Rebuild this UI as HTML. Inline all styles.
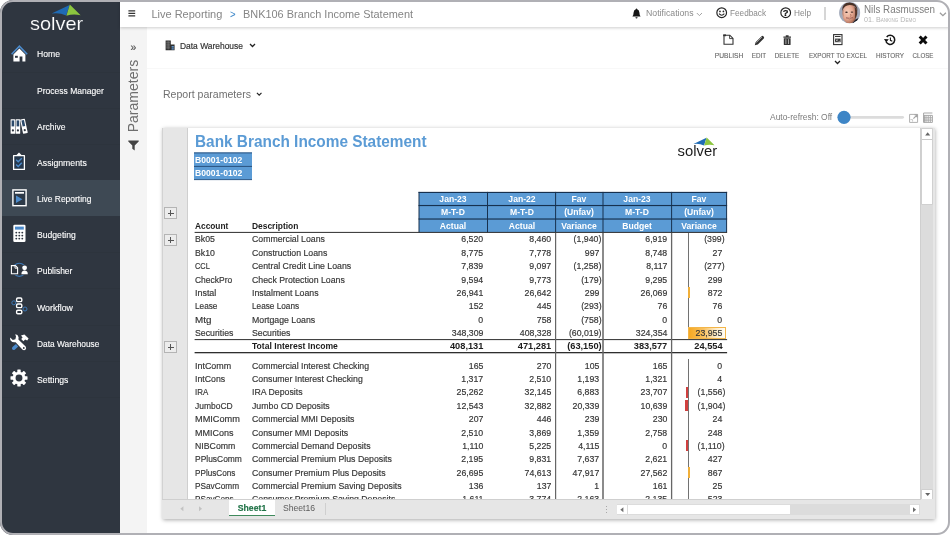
<!DOCTYPE html>
<html lang="en">
<head>
<meta charset="utf-8">
<title>Solver - Live Reporting - BNK106 Branch Income Statement</title>
<style>
html,body{margin:0;padding:0;width:950px;height:535px;overflow:hidden;background:#fff}
body{font-family:"Liberation Sans",sans-serif;position:relative}
#app{position:absolute;left:0;top:0;width:950px;height:535px;border-radius:13px;overflow:hidden;background:#fff;will-change:transform}
#frame{position:absolute;left:0;top:0;width:950px;height:535px;box-sizing:border-box;border:2px solid #b0b0b5;border-radius:13px;pointer-events:none}
.t{position:absolute;white-space:nowrap;display:block}
.a{position:absolute;display:block}
svg.a{overflow:visible}
#side{left:0;top:0;width:120px;height:535px;background:#2f3640}
#side .sep{position:absolute;left:0;width:120px;height:1px;background:#2d343d}
#side .act{position:absolute;left:0;top:180px;width:120px;height:36px;background:#3e4954}
#top{left:120px;top:0;width:830px;height:27px;background:#fff;box-shadow:0 1px 3px rgba(0,0,0,.2)}
#pstrip{left:120px;top:27px;width:27px;height:508px;background:#f4f4f4}
#sheet{left:162.5px;top:128px;width:772.2px;height:391px;background:#e6e6e6;box-shadow:0 1px 4px rgba(0,0,0,.35)}
#grid{left:188px;top:128px;width:732px;height:371px;background:#fff;overflow:hidden}
.plus{position:absolute;left:164px;width:11px;height:10px;border:1px solid #b4b4b4;background:#ececec;box-sizing:content-box}
.plus:before{content:"";position:absolute;left:2.5px;top:4.5px;width:6px;height:1px;background:#555}
.plus:after{content:"";position:absolute;left:5px;top:2px;width:1px;height:6px;background:#555}
.hc{position:absolute;background:#5b9bd5;box-sizing:border-box;border:1px solid #1f3f63}
.vl{position:absolute;background:#6b6b6b}
.hl{position:absolute;background:#3a3a3a}
</style>
</head>
<body>
<div id="app">
<div class="a" id="side">
<div class="sep" style="top:72px"></div>
<div class="sep" style="top:108px"></div>
<div class="sep" style="top:144px"></div>
<div class="sep" style="top:252px"></div>
<div class="sep" style="top:288px"></div>
<div class="sep" style="top:325px"></div>
<div class="sep" style="top:361px"></div>
<div class="sep" style="top:397px"></div>
<div class="act"></div>
</div>
<svg class="a" style="left:51px;top:4px" width="30" height="13" viewBox="0 0 30 13" ><path d="M0.6 9.6 L18.6 1 L15.2 11.6 Q8 8.2 0.6 9.6Z" fill="#1f6bb5"/><path d="M18.8 0.6 L29.6 11.2 Q22 9.6 15.4 11.8Z" fill="#8cc63f"/></svg>
<span class="t" style="top:12.53px;font-size:17.8px;line-height:23.14px;color:#fff;left:29.8px;transform-origin:0 50%;transform:scaleX(1.121);-webkit-text-stroke:0.15px #2f3640;">solver</span>
<svg class="a" style="left:11px;top:45px" width="17" height="17" viewBox="0 0 17 17" ><path d="M0.6 9.2 L8.4 1.2 L16.2 9.2" fill="none" stroke="#4c8bcc" stroke-width="1.6"/><path d="M2.4 9.6 L8.4 3.6 L14.4 9.6 V16.6 H11.4 V11.6 H8.6 V16.6 H2.4Z" fill="#fff"/><rect x="4" y="10.8" width="2.8" height="2" fill="#2f3640"/></svg>
<svg class="a" style="left:10px;top:118px" width="19" height="17" viewBox="0 0 19 17" ><rect x="0.6" y="1.2" width="4.6" height="14.6" rx="0.6" fill="#fff"/><rect x="5.6" y="1.2" width="4.6" height="14.6" rx="0.6" fill="#fff"/><rect x="1.6" y="2.4" width="2.6" height="6" fill="#2c4a6b"/><rect x="6.6" y="2.4" width="2.6" height="6" fill="#2c4a6b"/><circle cx="2.9" cy="12.4" r="1.1" fill="#2f3640"/><circle cx="7.9" cy="12.4" r="1.1" fill="#2f3640"/><g transform="rotate(-12 14 8.5)"><rect x="11.6" y="1" width="4.8" height="14.6" rx="0.6" fill="#fff"/><rect x="12.7" y="2.2" width="2.6" height="6" fill="#2c4a6b"/><circle cx="14" cy="12.2" r="1.1" fill="#2f3640"/></g></svg>
<svg class="a" style="left:12px;top:151px" width="14" height="20" viewBox="0 0 14 20" ><path d="M1.6 4.6 H12.4 V18.4 H1.6Z" fill="#26384d" stroke="#fff" stroke-width="1.3" stroke-linejoin="round"/><path d="M4 4.6 L7 1.4 L10 4.6Z" fill="#fff"/><path d="M4.2 8.8 L6.2 10.8 L9.8 7.2 M4.2 13.4 L6.2 15.4 L9.8 11.8" fill="none" stroke="#4c8bcc" stroke-width="1.4"/></svg>
<svg class="a" style="left:12px;top:189px" width="15" height="18" viewBox="0 0 15 18" ><rect x="0.9" y="0.9" width="13.2" height="15.8" fill="#2d3a48" stroke="#fff" stroke-width="1.4"/><rect x="3" y="3" width="9" height="1.7" fill="#fff"/><path d="M4 6.6 L10.4 10.3 L4 14Z" fill="#4c8bcc"/></svg>
<svg class="a" style="left:13px;top:224px" width="13" height="19" viewBox="0 0 13 19" ><rect x="0.3" y="0.8" width="12.2" height="17.2" rx="1.3" fill="#fff"/><rect x="2" y="2.6" width="8.8" height="3" fill="#4c8bcc"/><circle cx="3.3" cy="8.6" r="0.95" fill="#2f3640"/><circle cx="3.3" cy="11.6" r="0.95" fill="#2f3640"/><circle cx="3.3" cy="14.6" r="0.95" fill="#2f3640"/><circle cx="6.3" cy="8.6" r="0.95" fill="#2f3640"/><circle cx="6.3" cy="11.6" r="0.95" fill="#2f3640"/><circle cx="6.3" cy="14.6" r="0.95" fill="#2f3640"/><circle cx="9.3" cy="8.6" r="0.95" fill="#2f3640"/><circle cx="9.3" cy="11.6" r="0.95" fill="#2f3640"/><circle cx="9.3" cy="14.6" r="0.95" fill="#2f3640"/></svg>
<svg class="a" style="left:10px;top:260px" width="19" height="19" viewBox="0 0 19 19" ><circle cx="9.3" cy="9.8" r="6.6" fill="none" stroke="#3d78b5" stroke-width="1.1"/><rect x="0.2" y="5" width="8.4" height="9.8" fill="#2f3640"/><rect x="10.6" y="5" width="8" height="9.8" fill="#2f3640"/><path d="M1.4 5.6 H5.4 L7.6 7.8 V13.8 H1.4Z" fill="none" stroke="#fff" stroke-width="1.1"/><path d="M5 5.6 V8.2 H7.6" fill="none" stroke="#fff" stroke-width="0.9"/><circle cx="14.6" cy="7.8" r="2.4" fill="#fff"/><path d="M11.4 14.2 Q11.4 10.6 14.6 10.6 Q17.8 10.6 17.8 14.2Z" fill="#fff"/></svg>
<svg class="a" style="left:11px;top:296px" width="17" height="20" viewBox="0 0 17 20" ><circle cx="2.8" cy="6.8" r="2" fill="none" stroke="#3d78b5" stroke-width="1"/><circle cx="14" cy="13" r="2" fill="none" stroke="#3d78b5" stroke-width="1"/><rect x="5.6" y="2" width="5.2" height="3.6" rx="1.2" fill="#2f3640" stroke="#fff" stroke-width="1.4"/><rect x="5.6" y="8" width="5.2" height="3.6" rx="1.2" fill="#2f3640" stroke="#fff" stroke-width="1.4"/><rect x="5.6" y="14.2" width="5.2" height="3.6" rx="1.2" fill="#2f3640" stroke="#fff" stroke-width="1.4"/></svg>
<svg class="a" style="left:9px;top:333px" width="21" height="19" viewBox="0 0 21 19" ><path d="M4 13.4 L7 11 L9.2 13.6 L6 16.4 Q4.4 17.6 3.2 16.2 Q2.2 14.8 4 13.4Z" fill="#4c8bcc"/><path d="M12 2.4 L15.4 1.6 L19.6 5.6 L18.2 7.6 L16.2 6.4 L14.4 8.2 L12.2 6 L13.6 4.4Z" fill="#fff"/><path d="M6.2 1.2 Q9 1.4 9.6 4.2 L9.4 6.4 L16.6 13.6 Q17.8 15.4 16.4 16.8 Q14.8 17.8 13.4 16.4 L6.6 9.2 Q3.4 9.8 1.6 7.4 Q0.8 6 1.2 4.6 L3.8 7 L6.4 6.2 L7 3.6Z" fill="#fff"/><circle cx="14.8" cy="15" r="0.9" fill="#2f3640"/></svg>
<svg class="a" style="left:10.4px;top:369.4px" width="18" height="18" viewBox="-9 -9 18 18" ><rect x="-1.7" y="-8.5" width="3.4" height="4" rx="0.4" transform="rotate(0)" fill="#fff"/><rect x="-1.7" y="-8.5" width="3.4" height="4" rx="0.4" transform="rotate(45)" fill="#fff"/><rect x="-1.7" y="-8.5" width="3.4" height="4" rx="0.4" transform="rotate(90)" fill="#fff"/><rect x="-1.7" y="-8.5" width="3.4" height="4" rx="0.4" transform="rotate(135)" fill="#fff"/><rect x="-1.7" y="-8.5" width="3.4" height="4" rx="0.4" transform="rotate(180)" fill="#fff"/><rect x="-1.7" y="-8.5" width="3.4" height="4" rx="0.4" transform="rotate(225)" fill="#fff"/><rect x="-1.7" y="-8.5" width="3.4" height="4" rx="0.4" transform="rotate(270)" fill="#fff"/><rect x="-1.7" y="-8.5" width="3.4" height="4" rx="0.4" transform="rotate(315)" fill="#fff"/><circle r="4.9" fill="none" stroke="#fff" stroke-width="2.9"/></svg>
<span class="t" style="top:47.63px;font-size:9.8px;line-height:12.74px;color:#fff;left:36.7px;transform-origin:0 50%;transform:scaleX(0.880);-webkit-text-stroke:0.12px #fff;">Home</span>
<span class="t" style="top:84.93px;font-size:9.8px;line-height:12.74px;color:#fff;left:36.7px;transform-origin:0 50%;transform:scaleX(0.870);-webkit-text-stroke:0.12px #fff;">Process Manager</span>
<span class="t" style="top:121.23px;font-size:9.8px;line-height:12.74px;color:#fff;left:36.7px;transform-origin:0 50%;transform:scaleX(0.869);-webkit-text-stroke:0.12px #fff;">Archive</span>
<span class="t" style="top:157.23px;font-size:9.8px;line-height:12.74px;color:#fff;left:36.7px;transform-origin:0 50%;transform:scaleX(0.888);-webkit-text-stroke:0.12px #fff;">Assignments</span>
<span class="t" style="top:193.23px;font-size:9.8px;line-height:12.74px;color:#fff;left:36.7px;transform-origin:0 50%;transform:scaleX(0.861);-webkit-text-stroke:0.12px #fff;">Live Reporting</span>
<span class="t" style="top:228.93px;font-size:9.8px;line-height:12.74px;color:#fff;left:36.7px;transform-origin:0 50%;transform:scaleX(0.879);-webkit-text-stroke:0.12px #fff;">Budgeting</span>
<span class="t" style="top:264.93px;font-size:9.8px;line-height:12.74px;color:#fff;left:36.7px;transform-origin:0 50%;transform:scaleX(0.867);-webkit-text-stroke:0.12px #fff;">Publisher</span>
<span class="t" style="top:301.73px;font-size:9.8px;line-height:12.74px;color:#fff;left:36.7px;transform-origin:0 50%;transform:scaleX(0.893);-webkit-text-stroke:0.12px #fff;">Workflow</span>
<span class="t" style="top:337.63px;font-size:9.8px;line-height:12.74px;color:#fff;left:36.7px;transform-origin:0 50%;transform:scaleX(0.853);-webkit-text-stroke:0.12px #fff;">Data Warehouse</span>
<span class="t" style="top:374.23px;font-size:9.8px;line-height:12.74px;color:#fff;left:36.7px;transform-origin:0 50%;transform:scaleX(0.887);-webkit-text-stroke:0.12px #fff;">Settings</span>
<div class="a" id="pstrip"></div>
<span class="t" style="top:41.17px;font-size:10.5px;line-height:13.65px;color:#555;left:133.4px;transform-origin:0 50%;transform-origin:50% 50%;transform:translateX(-50%);-webkit-text-stroke:0.2px #555;">»</span>
<span class="t" style="top:85.92px;font-size:15.5px;line-height:20.15px;color:#6e6e6e;left:133.2px;transform-origin:0 50%;transform-origin:50% 50%;transform:translateX(-50%) rotate(-90deg) scaleX(0.905);">Parameters</span>
<svg class="a" style="left:127.6px;top:139.6px" width="11" height="11" viewBox="0 0 11 11" ><path d="M0.3 0.4 H10.7 V1.4 L6.7 5.6 V10.6 L4.3 8.8 V5.6 L0.3 1.4Z" fill="#444"/></svg>
<div class="a" style="left:147px;top:68px;width:803px;height:1px;background:#f8f8f8"></div>
<div class="a" id="top"></div>
<svg class="a" style="left:128px;top:10px" width="8" height="7" viewBox="0 0 8 7" ><path d="M0.4 0.9 H7.2 M0.4 3.4 H7.2 M0.4 5.9 H7.2" stroke="#333" stroke-width="1.1" fill="none"/></svg>
<span class="t" style="top:6.85px;font-size:11px;line-height:14.3px;color:#858585;left:151.4px;transform-origin:0 50%;">Live Reporting</span>
<span class="t" style="top:7.25px;font-size:11px;line-height:14.3px;color:#3b86c8;left:229.8px;transform-origin:0 50%;transform:scaleX(0.870);">&gt;</span>
<span class="t" style="top:6.85px;font-size:11px;line-height:14.3px;color:#858585;left:243.4px;transform-origin:0 50%;transform:scaleX(0.993);">BNK106 Branch Income Statement</span>
<svg class="a" style="left:631.8px;top:7.6px" width="9" height="11" viewBox="0 0 9 11" ><path d="M4.5 0.4 Q5.2 0.4 5.2 1.2 Q7.4 1.9 7.4 4.6 Q7.4 7.2 8.6 8.4 H0.4 Q1.6 7.2 1.6 4.6 Q1.6 1.9 3.8 1.2 Q3.8 0.4 4.5 0.4Z M3.4 9.2 H5.6 Q5.4 10.4 4.5 10.4 Q3.6 10.4 3.4 9.2Z" fill="#151515"/></svg>
<span class="t" style="top:7.85px;font-size:9px;line-height:11.7px;color:#8a8a8a;left:645.6px;transform-origin:0 50%;transform:scaleX(0.971);">Notifications</span>
<svg class="a" style="left:696px;top:12px" width="7" height="5" viewBox="0 0 7 5" ><path d="M0.8 1 L3.4 3.6 L6 1" fill="none" stroke="#9a9a9a" stroke-width="0.9"/></svg>
<svg class="a" style="left:716px;top:7.4px" width="11.4" height="11.4" viewBox="0 0 12 12" ><circle cx="6" cy="6" r="5.1" fill="none" stroke="#222" stroke-width="1.25"/><circle cx="4.2" cy="4.7" r="0.9" fill="#222"/><circle cx="7.8" cy="4.7" r="0.9" fill="#222"/><path d="M3.2 7 Q6 10.2 8.8 7" fill="none" stroke="#222" stroke-width="1.1"/></svg>
<span class="t" style="top:7.85px;font-size:9px;line-height:11.7px;color:#8a8a8a;left:730.4px;transform-origin:0 50%;transform:scaleX(0.911);">Feedback</span>
<svg class="a" style="left:780px;top:7.4px" width="11.4" height="11.4" viewBox="0 0 12 12" ><circle cx="6" cy="6" r="5.1" fill="none" stroke="#222" stroke-width="1.25"/></svg>
<span class="t" style="top:7.29px;font-size:9.4px;line-height:12.22px;color:#111;font-weight:700;left:785.7px;transform-origin:0 50%;transform-origin:50% 50%;transform:translateX(-50%);-webkit-text-stroke:0.2px #111;">?</span>
<span class="t" style="top:7.85px;font-size:9px;line-height:11.7px;color:#8a8a8a;left:794.4px;transform-origin:0 50%;transform:scaleX(0.918);">Help</span>
<div class="a" style="left:824.2px;top:7px;width:1.4px;height:13px;background:#d6d6d6"></div>
<svg class="a" style="left:838.9px;top:2.2px" width="21.4" height="21.4" viewBox="0 0 21.4 21.4" ><defs><clipPath id="av"><circle cx="10.7" cy="10.7" r="10.6"/></clipPath><filter id="avb" x="-20%" y="-20%" width="140%" height="140%"><feGaussianBlur stdDeviation="0.7"/></filter><radialGradient id="sk" cx="0.36" cy="0.4" r="0.7"><stop offset="0" stop-color="#f7cdb9"/><stop offset="0.5" stop-color="#e6ab94"/><stop offset="0.8" stop-color="#bb7b64"/><stop offset="1" stop-color="#7a4c3d"/></radialGradient></defs><g clip-path="url(#av)"><rect width="21.4" height="21.4" fill="#a2aaba"/><g filter="url(#avb)"><path d="M13 21.4 L15.4 18 L19.5 16 L21.4 21.4Z" fill="#1f222b"/><ellipse cx="10.5" cy="11.8" rx="7.1" ry="10" fill="url(#sk)"/><path d="M3 9 Q2.8 0.4 10.8 0.4 Q18.8 0.8 18.4 9.4 Q17.8 5.8 15.6 4.2 Q13 3 10.6 3.1 Q5.4 3.4 3 9Z" fill="#4a3027"/><path d="M15.6 4.6 Q18.8 7.6 18.2 12 Q17.6 14.8 16 16.4 Q16.6 10.4 15.6 4.6Z" fill="#553629"/><path d="M3.4 8 Q3 12 4.6 15.6 Q4 11 4.6 7.6Z" fill="#9a6a5a" opacity="0.7"/><ellipse cx="7.5" cy="10.3" rx="1.3" ry="0.7" fill="#3a2621"/><ellipse cx="13" cy="10.1" rx="1.3" ry="0.7" fill="#3a2621"/><path d="M11.6 12.2 Q12.4 14 11.6 14.6" stroke="#a96a56" stroke-width="1" fill="none"/><path d="M7 15.8 Q10.6 18.2 14 15.6 Q10.6 16.6 7 15.8Z" fill="#f4e4dc" stroke="#9c5549" stroke-width="0.6"/></g></g></svg>
<span class="t" style="top:2.64px;font-size:10.4px;line-height:13.52px;color:#7d7d7d;left:863.6px;transform-origin:0 50%;transform:scaleX(0.946);">Nils Rasmussen</span>
<span class="t" style="top:14.63px;font-size:7.8px;line-height:10.14px;color:#b4b4b4;left:863.8px;transform-origin:0 50%;transform:scaleX(0.919);font-variant:small-caps;">01. Banking Demo</span>
<svg class="a" style="left:938.6px;top:11.8px" width="8" height="5" viewBox="0 0 8 5" ><path d="M0.9 0.8 L3.9 3.7 L6.9 0.8" fill="none" stroke="#9c9c9c" stroke-width="1.25"/></svg>
<svg class="a" style="left:165.4px;top:40.4px" width="10" height="10.4" viewBox="0 0 10 10.4" ><path d="M0.6 10.2 V0.4 H5.8 V4.4 H9.6 V10.2Z" fill="#2e2e2e"/><path d="M1.2 2.2 H5.2 M1.2 4.1 H5.2 M1.2 6 H5.2 M1.2 7.9 H5.2" stroke="#a9a9a9" stroke-width="0.55"/><path d="M3.2 0.8 V9.6" stroke="#8a8a8a" stroke-width="0.4"/><rect x="6.6" y="6" width="2.2" height="1.6" fill="#5d8fc4"/><rect x="6.6" y="8.2" width="2.2" height="1.4" fill="#5d8fc4"/></svg>
<span class="t" style="top:39.86px;font-size:9.6px;line-height:12.48px;color:#333;left:180.3px;transform-origin:0 50%;transform:scaleX(0.879);-webkit-text-stroke:0.2px #333;">Data Warehouse</span>
<svg class="a" style="left:248.6px;top:43.4px" width="7" height="5" viewBox="0 0 7 5" ><path d="M1 1 L3.5 3.5 L6 1" fill="none" stroke="#222" stroke-width="1.3"/></svg>
<svg class="a" style="left:723.4px;top:34px" width="11" height="11" viewBox="0 0 11 11" ><path d="M1 1.2 H6.8 L10 4.4 V10.2 H1Z" fill="none" stroke="#333" stroke-width="1.1"/><path d="M6.6 1.2 V4.6 H10" fill="none" stroke="#333" stroke-width="0.9"/><path d="M0.2 0.4 H3 V2.2 H0.2Z" fill="#333"/></svg>
<span class="t" style="top:50.57px;font-size:7.9px;line-height:10.27px;color:#666;left:728.9px;transform-origin:0 50%;transform-origin:50% 50%;transform:translateX(-50%) scaleX(0.847);-webkit-text-stroke:0.12px #666;">PUBLISH</span>
<svg class="a" style="left:753.6px;top:34.6px" width="11" height="11" viewBox="0 0 11 11" ><path d="M0.8 10.2 L1.6 7.2 L7.6 1.2 Q8.4 0.4 9.3 1.3 L9.8 1.8 Q10.6 2.6 9.8 3.4 L3.8 9.4Z" fill="#333"/><path d="M2.4 7.6 L8 2" stroke="#fff" stroke-width="0.5"/></svg>
<span class="t" style="top:50.57px;font-size:7.9px;line-height:10.27px;color:#666;left:758.8px;transform-origin:0 50%;transform-origin:50% 50%;transform:translateX(-50%) scaleX(0.801);-webkit-text-stroke:0.12px #666;">EDIT</span>
<svg class="a" style="left:782.9px;top:34.8px" width="8.4" height="10.2" viewBox="0 0 8.4 10.2" ><path d="M0.4 1.5 H8 V2.7 H0.4Z M2.8 0.3 H5.6 V1.5 H2.8Z M0.8 3.2 H7.6 V9.4 Q7.6 10 7 10 H1.4 Q0.8 10 0.8 9.4Z" fill="#333"/><path d="M2.9 4.2 V9 M5.5 4.2 V9" stroke="#c8c8c8" stroke-width="0.8"/></svg>
<span class="t" style="top:50.57px;font-size:7.9px;line-height:10.27px;color:#666;left:787.2px;transform-origin:0 50%;transform-origin:50% 50%;transform:translateX(-50%) scaleX(0.795);-webkit-text-stroke:0.12px #666;">DELETE</span>
<svg class="a" style="left:833px;top:34.2px" width="9.6" height="11.2" viewBox="0 0 9.6 11.2" ><rect x="0.6" y="0.6" width="8.4" height="10" fill="#fff" stroke="#333" stroke-width="1.1"/><path d="M2 2.5 H7.6" stroke="#333" stroke-width="1"/><rect x="2" y="4.6" width="5.6" height="3.6" fill="#333"/><path d="M3 5.4 L4.8 7.4 M4.8 5.4 L3 7.4" stroke="#fff" stroke-width="0.6"/><path d="M5.6 7.3 H6.9" stroke="#fff" stroke-width="0.6"/></svg>
<span class="t" style="top:50.57px;font-size:7.9px;line-height:10.27px;color:#666;left:837.5px;transform-origin:0 50%;transform-origin:50% 50%;transform:translateX(-50%) scaleX(0.796);-webkit-text-stroke:0.12px #666;">EXPORT TO EXCEL</span>
<svg class="a" style="left:834px;top:60.2px" width="7" height="5" viewBox="0 0 7 5" ><path d="M1 1 L3.5 3.5 L6 1" fill="none" stroke="#222" stroke-width="1.3"/></svg>
<svg class="a" style="left:883.8px;top:34px" width="12" height="12" viewBox="0 0 12 12" ><path d="M2.7 3 A4.5 4.5 0 1 1 2.1 7.8" fill="none" stroke="#161616" stroke-width="1.5"/><path d="M0 5 L2.2 8.6 L4.8 5.2Z" fill="#161616"/><path d="M6.4 3.6 V6.3 L8.3 7.3" fill="none" stroke="#161616" stroke-width="1.1"/></svg>
<span class="t" style="top:50.57px;font-size:7.9px;line-height:10.27px;color:#666;left:890px;transform-origin:0 50%;transform-origin:50% 50%;transform:translateX(-50%) scaleX(0.805);-webkit-text-stroke:0.12px #666;">HISTORY</span>
<svg class="a" style="left:918px;top:35px" width="10" height="10" viewBox="0 0 10 10" ><path d="M1.7 1.5 L8.5 8.5 M8.5 1.5 L1.7 8.5" stroke="#0c0c0c" stroke-width="2.9" stroke-linecap="butt"/></svg>
<span class="t" style="top:50.57px;font-size:7.9px;line-height:10.27px;color:#666;left:923.4px;transform-origin:0 50%;transform-origin:50% 50%;transform:translateX(-50%) scaleX(0.785);-webkit-text-stroke:0.12px #666;">CLOSE</span>
<span class="t" style="top:86.36px;font-size:11.6px;line-height:15.08px;color:#707070;left:162.9px;transform-origin:0 50%;transform:scaleX(0.910);">Report parameters</span>
<svg class="a" style="left:256px;top:92.4px" width="6.4" height="4.6" viewBox="0 0 7 5" ><path d="M1 1 L3.5 3.5 L6 1" fill="none" stroke="#222" stroke-width="1.3"/></svg>
<span class="t" style="top:111.52px;font-size:9.2px;line-height:11.96px;color:#7c7c7c;left:770.2px;transform-origin:0 50%;transform:scaleX(0.918);">Auto-refresh: Off</span>
<svg class="a" style="left:0;top:0" width="950" height="535" viewBox="0 0 950 535"><rect x="846" y="115.9" width="58" height="2.8" rx="1.4" fill="#dcdcdc"/><circle cx="844" cy="117.3" r="6.6" fill="#3d85c6"/></svg>
<svg class="a" style="left:908.8px;top:112.6px" width="10" height="10" viewBox="0 0 10 10" ><path d="M0.6 1.4 H8.6 V9.4 H0.6Z" fill="none" stroke="#b0b0b0" stroke-width="1"/><path d="M4.4 5.6 L8 2 M5.4 1.8 H8.2 V4.6" fill="none" stroke="#a4a4a4" stroke-width="1.1"/><path d="M1.4 6.6 H3.6 V8.6" fill="none" stroke="#bcbcbc" stroke-width="0.8"/></svg>
<svg class="a" style="left:923.4px;top:112px" width="10" height="11" viewBox="0 0 10 11" ><path d="M0.6 1 H9.4 M0.6 3.4 H9.4 V10.4 H0.6 V1 M0.6 5.8 H9.4 M0.6 8.1 H9.4 M3 3.4 V10.4 M5.2 3.4 V10.4 M7.3 3.4 V10.4" fill="none" stroke="#a8a8a8" stroke-width="1"/><path d="M1.2 3.4 V10.4" stroke="#a0a0a0" stroke-width="1.2"/></svg>
<div class="a" id="sheet"></div>
<div class="a" style="left:162px;top:128px;width:1px;height:391px;background:#d2d2d2"></div>
<div class="a" id="grid"></div>
<div class="a" style="left:187px;top:128px;width:1px;height:371px;background:#cfcfcf"></div>
<div class="plus" style="top:207px"></div>
<div class="plus" style="top:234px"></div>
<div class="plus" style="top:341px"></div>
<span class="t" style="top:132.2px;font-size:16px;line-height:20.8px;color:#5b9bd5;font-weight:700;left:195.4px;transform-origin:0 50%;transform:scaleX(0.961);">Bank Branch Income Statement</span>
<svg class="a" style="left:0;top:0" width="950" height="535" viewBox="0 0 950 535"><rect x="194" y="152.6" width="58" height="27.2" fill="#5b9bd5"/><rect x="194" y="152.4" width="58" height="1" fill="#28527e"/><rect x="194" y="165.9" width="58" height="1" fill="#28527e"/><rect x="194" y="179.2" width="58" height="0.9" fill="#28527e"/></svg>
<span class="t" style="top:153.79px;font-size:9.25px;line-height:12.03px;color:#fff;font-weight:700;left:194.8px;transform-origin:0 50%;transform:scaleX(0.930);">B0001-0102</span>
<span class="t" style="top:167.29px;font-size:9.25px;line-height:12.03px;color:#fff;font-weight:700;left:194.8px;transform-origin:0 50%;transform:scaleX(0.930);">B0001-0102</span>
<svg class="a" style="left:693.4px;top:137.2px" width="21.8" height="9.5" viewBox="0 0 30 13" ><path d="M0.6 9.6 L18.6 1 L15.2 11.6 Q8 8.2 0.6 9.6Z" fill="#1f6bb5"/><path d="M18.8 0.6 L29.6 11.2 Q22 9.6 15.4 11.8Z" fill="#8cc63f"/></svg>
<span class="t" style="top:142.38px;font-size:14.8px;line-height:19.24px;color:#1c1c1c;left:677.6px;transform-origin:0 50%;">solver</span>
<svg class="a" style="left:0;top:0" width="950" height="535" viewBox="0 0 950 535"><rect x="419" y="192.4" width="307.6" height="40.0" fill="#5b9bd5"/><rect x="418.5" y="191.85" width="308.6" height="1.15" fill="#17314f"/><rect x="418.5" y="204.95" width="308.6" height="1.15" fill="#17314f"/><rect x="418.5" y="218.45" width="308.6" height="1.15" fill="#17314f"/><rect x="418.5" y="191.9" width="1" height="40.5" fill="#17314f"/><rect x="487.0" y="191.9" width="1" height="40.5" fill="#17314f"/><rect x="555.1" y="191.9" width="1" height="40.5" fill="#17314f"/><rect x="602.5" y="191.9" width="1" height="40.5" fill="#17314f"/><rect x="671.1" y="191.9" width="1" height="40.5" fill="#17314f"/><rect x="726.1" y="191.9" width="1" height="40.5" fill="#17314f"/><rect x="194.6" y="231.9" width="532.5" height="1" fill="#2e2e2e"/><rect x="194.6" y="339.1" width="532.5" height="1" fill="#2e2e2e"/><rect x="194.6" y="352" width="532.5" height="1.3" fill="#2e2e2e"/><rect x="555.0" y="232.9" width="1.2" height="266.1" fill="#666"/><rect x="602.25" y="232.9" width="1.5" height="266.1" fill="#666"/><rect x="670.95" y="232.9" width="1.3" height="266.1" fill="#666"/><rect x="688" y="232.9" width="0.85" height="106.5" fill="#5a5a5a"/><rect x="688" y="359" width="0.85" height="140" fill="#5a5a5a"/></svg>
<span class="t" style="top:193.04px;font-size:9.25px;line-height:12.03px;color:#fff;font-weight:700;left:453.25px;transform-origin:0 50%;transform-origin:50% 50%;transform:translateX(-50%) scaleX(0.930);">Jan-23</span>
<span class="t" style="top:206.34px;font-size:9.25px;line-height:12.03px;color:#fff;font-weight:700;left:453.25px;transform-origin:0 50%;transform-origin:50% 50%;transform:translateX(-50%) scaleX(0.930);">M-T-D</span>
<span class="t" style="top:219.79px;font-size:9.25px;line-height:12.03px;color:#fff;font-weight:700;left:453.25px;transform-origin:0 50%;transform-origin:50% 50%;transform:translateX(-50%) scaleX(0.930);">Actual</span>
<span class="t" style="top:193.04px;font-size:9.25px;line-height:12.03px;color:#fff;font-weight:700;left:521.55px;transform-origin:0 50%;transform-origin:50% 50%;transform:translateX(-50%) scaleX(0.930);">Jan-22</span>
<span class="t" style="top:206.34px;font-size:9.25px;line-height:12.03px;color:#fff;font-weight:700;left:521.55px;transform-origin:0 50%;transform-origin:50% 50%;transform:translateX(-50%) scaleX(0.930);">M-T-D</span>
<span class="t" style="top:219.79px;font-size:9.25px;line-height:12.03px;color:#fff;font-weight:700;left:521.55px;transform-origin:0 50%;transform-origin:50% 50%;transform:translateX(-50%) scaleX(0.930);">Actual</span>
<span class="t" style="top:193.04px;font-size:9.25px;line-height:12.03px;color:#fff;font-weight:700;left:579.3px;transform-origin:0 50%;transform-origin:50% 50%;transform:translateX(-50%) scaleX(0.930);">Fav</span>
<span class="t" style="top:206.34px;font-size:9.25px;line-height:12.03px;color:#fff;font-weight:700;left:579.3px;transform-origin:0 50%;transform-origin:50% 50%;transform:translateX(-50%) scaleX(0.930);">(Unfav)</span>
<span class="t" style="top:219.79px;font-size:9.25px;line-height:12.03px;color:#fff;font-weight:700;left:579.3px;transform-origin:0 50%;transform-origin:50% 50%;transform:translateX(-50%) scaleX(0.930);">Variance</span>
<span class="t" style="top:193.04px;font-size:9.25px;line-height:12.03px;color:#fff;font-weight:700;left:637.3px;transform-origin:0 50%;transform-origin:50% 50%;transform:translateX(-50%) scaleX(0.930);">Jan-23</span>
<span class="t" style="top:206.34px;font-size:9.25px;line-height:12.03px;color:#fff;font-weight:700;left:637.3px;transform-origin:0 50%;transform-origin:50% 50%;transform:translateX(-50%) scaleX(0.930);">M-T-D</span>
<span class="t" style="top:219.79px;font-size:9.25px;line-height:12.03px;color:#fff;font-weight:700;left:637.3px;transform-origin:0 50%;transform-origin:50% 50%;transform:translateX(-50%) scaleX(0.930);">Budget</span>
<span class="t" style="top:193.04px;font-size:9.25px;line-height:12.03px;color:#fff;font-weight:700;left:699.1px;transform-origin:0 50%;transform-origin:50% 50%;transform:translateX(-50%) scaleX(0.930);">Fav</span>
<span class="t" style="top:206.34px;font-size:9.25px;line-height:12.03px;color:#fff;font-weight:700;left:699.1px;transform-origin:0 50%;transform-origin:50% 50%;transform:translateX(-50%) scaleX(0.930);">(Unfav)</span>
<span class="t" style="top:219.79px;font-size:9.25px;line-height:12.03px;color:#fff;font-weight:700;left:699.1px;transform-origin:0 50%;transform-origin:50% 50%;transform:translateX(-50%) scaleX(0.930);">Variance</span>
<span class="t" style="top:220.19px;font-size:9.25px;line-height:12.03px;color:#1c1c1c;font-weight:700;left:195.0px;transform-origin:0 50%;transform:scaleX(0.900);">Account</span>
<span class="t" style="top:220.19px;font-size:9.25px;line-height:12.03px;color:#1c1c1c;font-weight:700;left:252.2px;transform-origin:0 50%;transform:scaleX(0.910);">Description</span>
<span class="t" style="top:233.49px;font-size:9.25px;line-height:12.03px;color:#363636;left:195.0px;transform-origin:0 50%;transform:scaleX(0.945);-webkit-text-stroke:0.18px #363636;">Bk05</span>
<span class="t" style="top:233.49px;font-size:9.25px;line-height:12.03px;color:#363636;left:252.1px;transform-origin:0 50%;transform:scaleX(0.945);-webkit-text-stroke:0.18px #363636;">Commercial Loans</span>
<span class="t" style="top:233.49px;font-size:9.25px;line-height:12.03px;color:#363636;right:466.6px;transform-origin:100% 50%;transform:scaleX(0.945);-webkit-text-stroke:0.18px #363636;">6,520</span>
<span class="t" style="top:233.49px;font-size:9.25px;line-height:12.03px;color:#363636;right:398.8px;transform-origin:100% 50%;transform:scaleX(0.945);-webkit-text-stroke:0.18px #363636;">8,460</span>
<span class="t" style="top:233.49px;font-size:9.25px;line-height:12.03px;color:#363636;right:348.4px;transform-origin:100% 50%;transform:scaleX(0.945);-webkit-text-stroke:0.18px #363636;">(1,940)</span>
<span class="t" style="top:233.49px;font-size:9.25px;line-height:12.03px;color:#363636;right:282.8px;transform-origin:100% 50%;transform:scaleX(0.945);-webkit-text-stroke:0.18px #363636;">6,919</span>
<span class="t" style="top:233.49px;font-size:9.25px;line-height:12.03px;color:#363636;right:225.0px;transform-origin:100% 50%;transform:scaleX(0.945);-webkit-text-stroke:0.18px #363636;">(399)</span>
<span class="t" style="top:246.86px;font-size:9.25px;line-height:12.03px;color:#363636;left:195.0px;transform-origin:0 50%;transform:scaleX(0.945);-webkit-text-stroke:0.18px #363636;">Bk10</span>
<span class="t" style="top:246.86px;font-size:9.25px;line-height:12.03px;color:#363636;left:252.1px;transform-origin:0 50%;transform:scaleX(0.945);-webkit-text-stroke:0.18px #363636;">Construction Loans</span>
<span class="t" style="top:246.86px;font-size:9.25px;line-height:12.03px;color:#363636;right:466.6px;transform-origin:100% 50%;transform:scaleX(0.945);-webkit-text-stroke:0.18px #363636;">8,775</span>
<span class="t" style="top:246.86px;font-size:9.25px;line-height:12.03px;color:#363636;right:398.8px;transform-origin:100% 50%;transform:scaleX(0.945);-webkit-text-stroke:0.18px #363636;">7,778</span>
<span class="t" style="top:246.86px;font-size:9.25px;line-height:12.03px;color:#363636;right:350.8px;transform-origin:100% 50%;transform:scaleX(0.945);-webkit-text-stroke:0.18px #363636;">997</span>
<span class="t" style="top:246.86px;font-size:9.25px;line-height:12.03px;color:#363636;right:282.8px;transform-origin:100% 50%;transform:scaleX(0.945);-webkit-text-stroke:0.18px #363636;">8,748</span>
<span class="t" style="top:246.86px;font-size:9.25px;line-height:12.03px;color:#363636;right:227.4px;transform-origin:100% 50%;transform:scaleX(0.945);-webkit-text-stroke:0.18px #363636;">27</span>
<span class="t" style="top:260.23px;font-size:9.25px;line-height:12.03px;color:#363636;left:195.0px;transform-origin:0 50%;transform:scaleX(0.799);-webkit-text-stroke:0.18px #363636;">CCL</span>
<span class="t" style="top:260.23px;font-size:9.25px;line-height:12.03px;color:#363636;left:252.1px;transform-origin:0 50%;transform:scaleX(0.945);-webkit-text-stroke:0.18px #363636;">Central Credit Line Loans</span>
<span class="t" style="top:260.23px;font-size:9.25px;line-height:12.03px;color:#363636;right:466.6px;transform-origin:100% 50%;transform:scaleX(0.945);-webkit-text-stroke:0.18px #363636;">7,839</span>
<span class="t" style="top:260.23px;font-size:9.25px;line-height:12.03px;color:#363636;right:398.8px;transform-origin:100% 50%;transform:scaleX(0.945);-webkit-text-stroke:0.18px #363636;">9,097</span>
<span class="t" style="top:260.23px;font-size:9.25px;line-height:12.03px;color:#363636;right:348.4px;transform-origin:100% 50%;transform:scaleX(0.945);-webkit-text-stroke:0.18px #363636;">(1,258)</span>
<span class="t" style="top:260.23px;font-size:9.25px;line-height:12.03px;color:#363636;right:282.8px;transform-origin:100% 50%;transform:scaleX(0.945);-webkit-text-stroke:0.18px #363636;">8,117</span>
<span class="t" style="top:260.23px;font-size:9.25px;line-height:12.03px;color:#363636;right:225.0px;transform-origin:100% 50%;transform:scaleX(0.945);-webkit-text-stroke:0.18px #363636;">(277)</span>
<span class="t" style="top:273.6px;font-size:9.25px;line-height:12.03px;color:#363636;left:195.0px;transform-origin:0 50%;transform:scaleX(0.916);-webkit-text-stroke:0.18px #363636;">CheckPro</span>
<span class="t" style="top:273.6px;font-size:9.25px;line-height:12.03px;color:#363636;left:252.1px;transform-origin:0 50%;transform:scaleX(0.945);-webkit-text-stroke:0.18px #363636;">Check Protection Loans</span>
<span class="t" style="top:273.6px;font-size:9.25px;line-height:12.03px;color:#363636;right:466.6px;transform-origin:100% 50%;transform:scaleX(0.945);-webkit-text-stroke:0.18px #363636;">9,594</span>
<span class="t" style="top:273.6px;font-size:9.25px;line-height:12.03px;color:#363636;right:398.8px;transform-origin:100% 50%;transform:scaleX(0.945);-webkit-text-stroke:0.18px #363636;">9,773</span>
<span class="t" style="top:273.6px;font-size:9.25px;line-height:12.03px;color:#363636;right:348.4px;transform-origin:100% 50%;transform:scaleX(0.945);-webkit-text-stroke:0.18px #363636;">(179)</span>
<span class="t" style="top:273.6px;font-size:9.25px;line-height:12.03px;color:#363636;right:282.8px;transform-origin:100% 50%;transform:scaleX(0.945);-webkit-text-stroke:0.18px #363636;">9,295</span>
<span class="t" style="top:273.6px;font-size:9.25px;line-height:12.03px;color:#363636;right:227.4px;transform-origin:100% 50%;transform:scaleX(0.945);-webkit-text-stroke:0.18px #363636;">299</span>
<div class="a" style="left:688px;top:287.38px;width:2.2px;height:11px;background:#f2b03a"></div>
<span class="t" style="top:286.97px;font-size:9.25px;line-height:12.03px;color:#363636;left:195.0px;transform-origin:0 50%;transform:scaleX(0.963);-webkit-text-stroke:0.18px #363636;">Instal</span>
<span class="t" style="top:286.97px;font-size:9.25px;line-height:12.03px;color:#363636;left:252.1px;transform-origin:0 50%;transform:scaleX(0.945);-webkit-text-stroke:0.18px #363636;">Instalment Loans</span>
<span class="t" style="top:286.97px;font-size:9.25px;line-height:12.03px;color:#363636;right:466.6px;transform-origin:100% 50%;transform:scaleX(0.945);-webkit-text-stroke:0.18px #363636;">26,941</span>
<span class="t" style="top:286.97px;font-size:9.25px;line-height:12.03px;color:#363636;right:398.8px;transform-origin:100% 50%;transform:scaleX(0.945);-webkit-text-stroke:0.18px #363636;">26,642</span>
<span class="t" style="top:286.97px;font-size:9.25px;line-height:12.03px;color:#363636;right:350.8px;transform-origin:100% 50%;transform:scaleX(0.945);-webkit-text-stroke:0.18px #363636;">299</span>
<span class="t" style="top:286.97px;font-size:9.25px;line-height:12.03px;color:#363636;right:282.8px;transform-origin:100% 50%;transform:scaleX(0.945);-webkit-text-stroke:0.18px #363636;">26,069</span>
<span class="t" style="top:286.97px;font-size:9.25px;line-height:12.03px;color:#363636;right:227.4px;transform-origin:100% 50%;transform:scaleX(0.945);-webkit-text-stroke:0.18px #363636;">872</span>
<span class="t" style="top:300.34px;font-size:9.25px;line-height:12.03px;color:#363636;left:195.0px;transform-origin:0 50%;transform:scaleX(0.889);-webkit-text-stroke:0.18px #363636;">Lease</span>
<span class="t" style="top:300.34px;font-size:9.25px;line-height:12.03px;color:#363636;left:252.1px;transform-origin:0 50%;transform:scaleX(0.889);-webkit-text-stroke:0.18px #363636;">Lease Loans</span>
<span class="t" style="top:300.34px;font-size:9.25px;line-height:12.03px;color:#363636;right:466.6px;transform-origin:100% 50%;transform:scaleX(0.945);-webkit-text-stroke:0.18px #363636;">152</span>
<span class="t" style="top:300.34px;font-size:9.25px;line-height:12.03px;color:#363636;right:398.8px;transform-origin:100% 50%;transform:scaleX(0.945);-webkit-text-stroke:0.18px #363636;">445</span>
<span class="t" style="top:300.34px;font-size:9.25px;line-height:12.03px;color:#363636;right:348.4px;transform-origin:100% 50%;transform:scaleX(0.945);-webkit-text-stroke:0.18px #363636;">(293)</span>
<span class="t" style="top:300.34px;font-size:9.25px;line-height:12.03px;color:#363636;right:282.8px;transform-origin:100% 50%;transform:scaleX(0.945);-webkit-text-stroke:0.18px #363636;">76</span>
<span class="t" style="top:300.34px;font-size:9.25px;line-height:12.03px;color:#363636;right:227.4px;transform-origin:100% 50%;transform:scaleX(0.945);-webkit-text-stroke:0.18px #363636;">76</span>
<span class="t" style="top:313.71px;font-size:9.25px;line-height:12.03px;color:#363636;left:195.0px;transform-origin:0 50%;transform:scaleX(1.063);-webkit-text-stroke:0.18px #363636;">Mtg</span>
<span class="t" style="top:313.71px;font-size:9.25px;line-height:12.03px;color:#363636;left:252.1px;transform-origin:0 50%;transform:scaleX(0.945);-webkit-text-stroke:0.18px #363636;">Mortgage Loans</span>
<span class="t" style="top:313.71px;font-size:9.25px;line-height:12.03px;color:#363636;right:466.6px;transform-origin:100% 50%;transform:scaleX(0.945);-webkit-text-stroke:0.18px #363636;">0</span>
<span class="t" style="top:313.71px;font-size:9.25px;line-height:12.03px;color:#363636;right:398.8px;transform-origin:100% 50%;transform:scaleX(0.945);-webkit-text-stroke:0.18px #363636;">758</span>
<span class="t" style="top:313.71px;font-size:9.25px;line-height:12.03px;color:#363636;right:348.4px;transform-origin:100% 50%;transform:scaleX(0.945);-webkit-text-stroke:0.18px #363636;">(758)</span>
<span class="t" style="top:313.71px;font-size:9.25px;line-height:12.03px;color:#363636;right:282.8px;transform-origin:100% 50%;transform:scaleX(0.945);-webkit-text-stroke:0.18px #363636;">0</span>
<span class="t" style="top:313.71px;font-size:9.25px;line-height:12.03px;color:#363636;right:227.4px;transform-origin:100% 50%;transform:scaleX(0.945);-webkit-text-stroke:0.18px #363636;">0</span>
<div class="a" style="left:688px;top:327.09000000000003px;width:38.4px;height:12.4px;box-sizing:border-box;border:1px solid #f3b64a;background:linear-gradient(90deg,#f6a821 0%,#f9c160 40%,#fdeccb 75%,#fffdf8 100%)"></div>
<span class="t" style="top:327.07px;font-size:9.25px;line-height:12.03px;color:#363636;left:195.0px;transform-origin:0 50%;transform:scaleX(0.945);-webkit-text-stroke:0.18px #363636;">Securities</span>
<span class="t" style="top:327.07px;font-size:9.25px;line-height:12.03px;color:#363636;left:252.1px;transform-origin:0 50%;transform:scaleX(0.945);-webkit-text-stroke:0.18px #363636;">Securities</span>
<span class="t" style="top:327.07px;font-size:9.25px;line-height:12.03px;color:#363636;right:466.6px;transform-origin:100% 50%;transform:scaleX(0.945);-webkit-text-stroke:0.18px #363636;">348,309</span>
<span class="t" style="top:327.07px;font-size:9.25px;line-height:12.03px;color:#363636;right:398.8px;transform-origin:100% 50%;transform:scaleX(0.945);-webkit-text-stroke:0.18px #363636;">408,328</span>
<span class="t" style="top:327.07px;font-size:9.25px;line-height:12.03px;color:#363636;right:348.4px;transform-origin:100% 50%;transform:scaleX(0.945);-webkit-text-stroke:0.18px #363636;">(60,019)</span>
<span class="t" style="top:327.07px;font-size:9.25px;line-height:12.03px;color:#363636;right:282.8px;transform-origin:100% 50%;transform:scaleX(0.945);-webkit-text-stroke:0.18px #363636;">324,354</span>
<span class="t" style="top:327.07px;font-size:9.25px;line-height:12.03px;color:#363636;right:227.4px;transform-origin:100% 50%;transform:scaleX(0.945);-webkit-text-stroke:0.18px #363636;">23,955</span>
<span class="t" style="top:340.44px;font-size:9.25px;line-height:12.03px;color:#1c1c1c;font-weight:700;left:252.1px;transform-origin:0 50%;transform:scaleX(0.930);">Total Interest Income</span>
<span class="t" style="top:340.44px;font-size:9.25px;line-height:12.03px;color:#1c1c1c;font-weight:700;right:466.6px;transform-origin:100% 50%;">408,131</span>
<span class="t" style="top:340.44px;font-size:9.25px;line-height:12.03px;color:#1c1c1c;font-weight:700;right:398.8px;transform-origin:100% 50%;">471,281</span>
<span class="t" style="top:340.44px;font-size:9.25px;line-height:12.03px;color:#1c1c1c;font-weight:700;right:348.4px;transform-origin:100% 50%;">(63,150)</span>
<span class="t" style="top:340.44px;font-size:9.25px;line-height:12.03px;color:#1c1c1c;font-weight:700;right:282.8px;transform-origin:100% 50%;">383,577</span>
<span class="t" style="top:340.44px;font-size:9.25px;line-height:12.03px;color:#1c1c1c;font-weight:700;right:227.4px;transform-origin:100% 50%;">24,554</span>
<span class="t" style="top:359.69px;font-size:9.25px;line-height:12.03px;color:#363636;left:195.0px;transform-origin:0 50%;transform:scaleX(0.965);-webkit-text-stroke:0.18px #363636;">IntComm</span>
<span class="t" style="top:359.69px;font-size:9.25px;line-height:12.03px;color:#363636;left:252.1px;transform-origin:0 50%;transform:scaleX(0.945);-webkit-text-stroke:0.18px #363636;">Commercial Interest Checking</span>
<span class="t" style="top:359.69px;font-size:9.25px;line-height:12.03px;color:#363636;right:466.6px;transform-origin:100% 50%;transform:scaleX(0.945);-webkit-text-stroke:0.18px #363636;">165</span>
<span class="t" style="top:359.69px;font-size:9.25px;line-height:12.03px;color:#363636;right:398.8px;transform-origin:100% 50%;transform:scaleX(0.945);-webkit-text-stroke:0.18px #363636;">270</span>
<span class="t" style="top:359.69px;font-size:9.25px;line-height:12.03px;color:#363636;right:350.8px;transform-origin:100% 50%;transform:scaleX(0.945);-webkit-text-stroke:0.18px #363636;">105</span>
<span class="t" style="top:359.69px;font-size:9.25px;line-height:12.03px;color:#363636;right:282.8px;transform-origin:100% 50%;transform:scaleX(0.945);-webkit-text-stroke:0.18px #363636;">165</span>
<span class="t" style="top:359.69px;font-size:9.25px;line-height:12.03px;color:#363636;right:227.4px;transform-origin:100% 50%;transform:scaleX(0.945);-webkit-text-stroke:0.18px #363636;">0</span>
<span class="t" style="top:373.06px;font-size:9.25px;line-height:12.03px;color:#363636;left:195.0px;transform-origin:0 50%;transform:scaleX(0.945);-webkit-text-stroke:0.18px #363636;">IntCons</span>
<span class="t" style="top:373.06px;font-size:9.25px;line-height:12.03px;color:#363636;left:252.1px;transform-origin:0 50%;transform:scaleX(0.945);-webkit-text-stroke:0.18px #363636;">Consumer Interest Checking</span>
<span class="t" style="top:373.06px;font-size:9.25px;line-height:12.03px;color:#363636;right:466.6px;transform-origin:100% 50%;transform:scaleX(0.945);-webkit-text-stroke:0.18px #363636;">1,317</span>
<span class="t" style="top:373.06px;font-size:9.25px;line-height:12.03px;color:#363636;right:398.8px;transform-origin:100% 50%;transform:scaleX(0.945);-webkit-text-stroke:0.18px #363636;">2,510</span>
<span class="t" style="top:373.06px;font-size:9.25px;line-height:12.03px;color:#363636;right:350.8px;transform-origin:100% 50%;transform:scaleX(0.945);-webkit-text-stroke:0.18px #363636;">1,193</span>
<span class="t" style="top:373.06px;font-size:9.25px;line-height:12.03px;color:#363636;right:282.8px;transform-origin:100% 50%;transform:scaleX(0.945);-webkit-text-stroke:0.18px #363636;">1,321</span>
<span class="t" style="top:373.06px;font-size:9.25px;line-height:12.03px;color:#363636;right:227.4px;transform-origin:100% 50%;transform:scaleX(0.945);-webkit-text-stroke:0.18px #363636;">4</span>
<div class="a" style="left:686.0px;top:386.84px;width:2.0px;height:11px;background:#d0403f"></div>
<span class="t" style="top:386.43px;font-size:9.25px;line-height:12.03px;color:#363636;left:195.0px;transform-origin:0 50%;transform:scaleX(0.856);-webkit-text-stroke:0.18px #363636;">IRA</span>
<span class="t" style="top:386.43px;font-size:9.25px;line-height:12.03px;color:#363636;left:252.1px;transform-origin:0 50%;transform:scaleX(0.945);-webkit-text-stroke:0.18px #363636;">IRA Deposits</span>
<span class="t" style="top:386.43px;font-size:9.25px;line-height:12.03px;color:#363636;right:466.6px;transform-origin:100% 50%;transform:scaleX(0.945);-webkit-text-stroke:0.18px #363636;">25,262</span>
<span class="t" style="top:386.43px;font-size:9.25px;line-height:12.03px;color:#363636;right:398.8px;transform-origin:100% 50%;transform:scaleX(0.945);-webkit-text-stroke:0.18px #363636;">32,145</span>
<span class="t" style="top:386.43px;font-size:9.25px;line-height:12.03px;color:#363636;right:350.8px;transform-origin:100% 50%;transform:scaleX(0.945);-webkit-text-stroke:0.18px #363636;">6,883</span>
<span class="t" style="top:386.43px;font-size:9.25px;line-height:12.03px;color:#363636;right:282.8px;transform-origin:100% 50%;transform:scaleX(0.945);-webkit-text-stroke:0.18px #363636;">23,707</span>
<span class="t" style="top:386.43px;font-size:9.25px;line-height:12.03px;color:#363636;right:225.0px;transform-origin:100% 50%;transform:scaleX(0.945);-webkit-text-stroke:0.18px #363636;">(1,556)</span>
<div class="a" style="left:685.4px;top:400.21px;width:2.6px;height:11px;background:#d0403f"></div>
<span class="t" style="top:399.8px;font-size:9.25px;line-height:12.03px;color:#363636;left:195.0px;transform-origin:0 50%;transform:scaleX(0.914);-webkit-text-stroke:0.18px #363636;">JumboCD</span>
<span class="t" style="top:399.8px;font-size:9.25px;line-height:12.03px;color:#363636;left:252.1px;transform-origin:0 50%;transform:scaleX(0.945);-webkit-text-stroke:0.18px #363636;">Jumbo CD Deposits</span>
<span class="t" style="top:399.8px;font-size:9.25px;line-height:12.03px;color:#363636;right:466.6px;transform-origin:100% 50%;transform:scaleX(0.945);-webkit-text-stroke:0.18px #363636;">12,543</span>
<span class="t" style="top:399.8px;font-size:9.25px;line-height:12.03px;color:#363636;right:398.8px;transform-origin:100% 50%;transform:scaleX(0.945);-webkit-text-stroke:0.18px #363636;">32,882</span>
<span class="t" style="top:399.8px;font-size:9.25px;line-height:12.03px;color:#363636;right:350.8px;transform-origin:100% 50%;transform:scaleX(0.945);-webkit-text-stroke:0.18px #363636;">20,339</span>
<span class="t" style="top:399.8px;font-size:9.25px;line-height:12.03px;color:#363636;right:282.8px;transform-origin:100% 50%;transform:scaleX(0.945);-webkit-text-stroke:0.18px #363636;">10,639</span>
<span class="t" style="top:399.8px;font-size:9.25px;line-height:12.03px;color:#363636;right:225.0px;transform-origin:100% 50%;transform:scaleX(0.945);-webkit-text-stroke:0.18px #363636;">(1,904)</span>
<span class="t" style="top:413.17px;font-size:9.25px;line-height:12.03px;color:#363636;left:195.0px;transform-origin:0 50%;transform:scaleX(0.993);-webkit-text-stroke:0.18px #363636;">MMIComm</span>
<span class="t" style="top:413.17px;font-size:9.25px;line-height:12.03px;color:#363636;left:252.1px;transform-origin:0 50%;transform:scaleX(0.945);-webkit-text-stroke:0.18px #363636;">Commercial MMI Deposits</span>
<span class="t" style="top:413.17px;font-size:9.25px;line-height:12.03px;color:#363636;right:466.6px;transform-origin:100% 50%;transform:scaleX(0.945);-webkit-text-stroke:0.18px #363636;">207</span>
<span class="t" style="top:413.17px;font-size:9.25px;line-height:12.03px;color:#363636;right:398.8px;transform-origin:100% 50%;transform:scaleX(0.945);-webkit-text-stroke:0.18px #363636;">446</span>
<span class="t" style="top:413.17px;font-size:9.25px;line-height:12.03px;color:#363636;right:350.8px;transform-origin:100% 50%;transform:scaleX(0.945);-webkit-text-stroke:0.18px #363636;">239</span>
<span class="t" style="top:413.17px;font-size:9.25px;line-height:12.03px;color:#363636;right:282.8px;transform-origin:100% 50%;transform:scaleX(0.945);-webkit-text-stroke:0.18px #363636;">230</span>
<span class="t" style="top:413.17px;font-size:9.25px;line-height:12.03px;color:#363636;right:227.4px;transform-origin:100% 50%;transform:scaleX(0.945);-webkit-text-stroke:0.18px #363636;">24</span>
<span class="t" style="top:426.54px;font-size:9.25px;line-height:12.03px;color:#363636;left:195.0px;transform-origin:0 50%;transform:scaleX(0.973);-webkit-text-stroke:0.18px #363636;">MMICons</span>
<span class="t" style="top:426.54px;font-size:9.25px;line-height:12.03px;color:#363636;left:252.1px;transform-origin:0 50%;transform:scaleX(0.945);-webkit-text-stroke:0.18px #363636;">Consumer MMI Deposits</span>
<span class="t" style="top:426.54px;font-size:9.25px;line-height:12.03px;color:#363636;right:466.6px;transform-origin:100% 50%;transform:scaleX(0.945);-webkit-text-stroke:0.18px #363636;">2,510</span>
<span class="t" style="top:426.54px;font-size:9.25px;line-height:12.03px;color:#363636;right:398.8px;transform-origin:100% 50%;transform:scaleX(0.945);-webkit-text-stroke:0.18px #363636;">3,869</span>
<span class="t" style="top:426.54px;font-size:9.25px;line-height:12.03px;color:#363636;right:350.8px;transform-origin:100% 50%;transform:scaleX(0.945);-webkit-text-stroke:0.18px #363636;">1,359</span>
<span class="t" style="top:426.54px;font-size:9.25px;line-height:12.03px;color:#363636;right:282.8px;transform-origin:100% 50%;transform:scaleX(0.945);-webkit-text-stroke:0.18px #363636;">2,758</span>
<span class="t" style="top:426.54px;font-size:9.25px;line-height:12.03px;color:#363636;right:227.4px;transform-origin:100% 50%;transform:scaleX(0.945);-webkit-text-stroke:0.18px #363636;">248</span>
<div class="a" style="left:686.4px;top:440.32px;width:1.6px;height:11px;background:#d0403f"></div>
<span class="t" style="top:439.91px;font-size:9.25px;line-height:12.03px;color:#363636;left:195.0px;transform-origin:0 50%;transform:scaleX(0.945);-webkit-text-stroke:0.18px #363636;">NIBComm</span>
<span class="t" style="top:439.91px;font-size:9.25px;line-height:12.03px;color:#363636;left:252.1px;transform-origin:0 50%;transform:scaleX(0.945);-webkit-text-stroke:0.18px #363636;">Commercial Demand Deposits</span>
<span class="t" style="top:439.91px;font-size:9.25px;line-height:12.03px;color:#363636;right:466.6px;transform-origin:100% 50%;transform:scaleX(0.945);-webkit-text-stroke:0.18px #363636;">1,110</span>
<span class="t" style="top:439.91px;font-size:9.25px;line-height:12.03px;color:#363636;right:398.8px;transform-origin:100% 50%;transform:scaleX(0.945);-webkit-text-stroke:0.18px #363636;">5,225</span>
<span class="t" style="top:439.91px;font-size:9.25px;line-height:12.03px;color:#363636;right:350.8px;transform-origin:100% 50%;transform:scaleX(0.945);-webkit-text-stroke:0.18px #363636;">4,115</span>
<span class="t" style="top:439.91px;font-size:9.25px;line-height:12.03px;color:#363636;right:282.8px;transform-origin:100% 50%;transform:scaleX(0.945);-webkit-text-stroke:0.18px #363636;">0</span>
<span class="t" style="top:439.91px;font-size:9.25px;line-height:12.03px;color:#363636;right:225.0px;transform-origin:100% 50%;transform:scaleX(0.945);-webkit-text-stroke:0.18px #363636;">(1,110)</span>
<span class="t" style="top:453.28px;font-size:9.25px;line-height:12.03px;color:#363636;left:195.0px;transform-origin:0 50%;transform:scaleX(0.912);-webkit-text-stroke:0.18px #363636;">PPlusComm</span>
<span class="t" style="top:453.28px;font-size:9.25px;line-height:12.03px;color:#363636;left:252.1px;transform-origin:0 50%;transform:scaleX(0.945);-webkit-text-stroke:0.18px #363636;">Commercial Premium Plus Deposits</span>
<span class="t" style="top:453.28px;font-size:9.25px;line-height:12.03px;color:#363636;right:466.6px;transform-origin:100% 50%;transform:scaleX(0.945);-webkit-text-stroke:0.18px #363636;">2,195</span>
<span class="t" style="top:453.28px;font-size:9.25px;line-height:12.03px;color:#363636;right:398.8px;transform-origin:100% 50%;transform:scaleX(0.945);-webkit-text-stroke:0.18px #363636;">9,831</span>
<span class="t" style="top:453.28px;font-size:9.25px;line-height:12.03px;color:#363636;right:350.8px;transform-origin:100% 50%;transform:scaleX(0.945);-webkit-text-stroke:0.18px #363636;">7,637</span>
<span class="t" style="top:453.28px;font-size:9.25px;line-height:12.03px;color:#363636;right:282.8px;transform-origin:100% 50%;transform:scaleX(0.945);-webkit-text-stroke:0.18px #363636;">2,621</span>
<span class="t" style="top:453.28px;font-size:9.25px;line-height:12.03px;color:#363636;right:227.4px;transform-origin:100% 50%;transform:scaleX(0.945);-webkit-text-stroke:0.18px #363636;">427</span>
<div class="a" style="left:688px;top:467.06px;width:2.0px;height:11px;background:#f2b03a"></div>
<span class="t" style="top:466.65px;font-size:9.25px;line-height:12.03px;color:#363636;left:195.0px;transform-origin:0 50%;transform:scaleX(0.883);-webkit-text-stroke:0.18px #363636;">PPlusCons</span>
<span class="t" style="top:466.65px;font-size:9.25px;line-height:12.03px;color:#363636;left:252.1px;transform-origin:0 50%;transform:scaleX(0.945);-webkit-text-stroke:0.18px #363636;">Consumer Premium Plus Deposits</span>
<span class="t" style="top:466.65px;font-size:9.25px;line-height:12.03px;color:#363636;right:466.6px;transform-origin:100% 50%;transform:scaleX(0.945);-webkit-text-stroke:0.18px #363636;">26,695</span>
<span class="t" style="top:466.65px;font-size:9.25px;line-height:12.03px;color:#363636;right:398.8px;transform-origin:100% 50%;transform:scaleX(0.945);-webkit-text-stroke:0.18px #363636;">74,613</span>
<span class="t" style="top:466.65px;font-size:9.25px;line-height:12.03px;color:#363636;right:350.8px;transform-origin:100% 50%;transform:scaleX(0.945);-webkit-text-stroke:0.18px #363636;">47,917</span>
<span class="t" style="top:466.65px;font-size:9.25px;line-height:12.03px;color:#363636;right:282.8px;transform-origin:100% 50%;transform:scaleX(0.945);-webkit-text-stroke:0.18px #363636;">27,562</span>
<span class="t" style="top:466.65px;font-size:9.25px;line-height:12.03px;color:#363636;right:227.4px;transform-origin:100% 50%;transform:scaleX(0.945);-webkit-text-stroke:0.18px #363636;">867</span>
<span class="t" style="top:480.01px;font-size:9.25px;line-height:12.03px;color:#363636;left:195.0px;transform-origin:0 50%;transform:scaleX(0.893);-webkit-text-stroke:0.18px #363636;">PSavComm</span>
<span class="t" style="top:480.01px;font-size:9.25px;line-height:12.03px;color:#363636;left:252.1px;transform-origin:0 50%;transform:scaleX(0.945);-webkit-text-stroke:0.18px #363636;">Commercial Premium Saving Deposits</span>
<span class="t" style="top:480.01px;font-size:9.25px;line-height:12.03px;color:#363636;right:466.6px;transform-origin:100% 50%;transform:scaleX(0.945);-webkit-text-stroke:0.18px #363636;">136</span>
<span class="t" style="top:480.01px;font-size:9.25px;line-height:12.03px;color:#363636;right:398.8px;transform-origin:100% 50%;transform:scaleX(0.945);-webkit-text-stroke:0.18px #363636;">137</span>
<span class="t" style="top:480.01px;font-size:9.25px;line-height:12.03px;color:#363636;right:350.8px;transform-origin:100% 50%;transform:scaleX(0.945);-webkit-text-stroke:0.18px #363636;">1</span>
<span class="t" style="top:480.01px;font-size:9.25px;line-height:12.03px;color:#363636;right:282.8px;transform-origin:100% 50%;transform:scaleX(0.945);-webkit-text-stroke:0.18px #363636;">161</span>
<span class="t" style="top:480.01px;font-size:9.25px;line-height:12.03px;color:#363636;right:227.4px;transform-origin:100% 50%;transform:scaleX(0.945);-webkit-text-stroke:0.18px #363636;">25</span>
<span class="t" style="top:493.38px;font-size:9.25px;line-height:12.03px;color:#363636;left:195.0px;transform-origin:0 50%;transform:scaleX(0.883);-webkit-text-stroke:0.18px #363636;">PSavCons</span>
<span class="t" style="top:493.38px;font-size:9.25px;line-height:12.03px;color:#363636;left:252.1px;transform-origin:0 50%;transform:scaleX(0.945);-webkit-text-stroke:0.18px #363636;">Consumer Premium Saving Deposits</span>
<span class="t" style="top:493.38px;font-size:9.25px;line-height:12.03px;color:#363636;right:466.6px;transform-origin:100% 50%;transform:scaleX(0.945);-webkit-text-stroke:0.18px #363636;">1,611</span>
<span class="t" style="top:493.38px;font-size:9.25px;line-height:12.03px;color:#363636;right:398.8px;transform-origin:100% 50%;transform:scaleX(0.945);-webkit-text-stroke:0.18px #363636;">3,774</span>
<span class="t" style="top:493.38px;font-size:9.25px;line-height:12.03px;color:#363636;right:350.8px;transform-origin:100% 50%;transform:scaleX(0.945);-webkit-text-stroke:0.18px #363636;">2,163</span>
<span class="t" style="top:493.38px;font-size:9.25px;line-height:12.03px;color:#363636;right:282.8px;transform-origin:100% 50%;transform:scaleX(0.945);-webkit-text-stroke:0.18px #363636;">2,135</span>
<span class="t" style="top:493.38px;font-size:9.25px;line-height:12.03px;color:#363636;right:227.4px;transform-origin:100% 50%;transform:scaleX(0.945);-webkit-text-stroke:0.18px #363636;">523</span>
<div class="a" style="left:920px;top:128px;width:14px;height:371px;background:#e6e6e6"></div>
<div class="a" style="left:921.4px;top:128px;width:11.6px;height:371px;background:#dcdcdc"></div>
<div class="a" style="left:920px;top:128px;width:1px;height:371px;background:#cfcfcf"></div>
<div class="a" style="left:922.4px;top:129px;width:9.6px;height:75.4px;background:#fff;box-shadow:0 0 0 0.6px #c8c8c8"></div>
<div class="a" style="left:922.4px;top:139px;width:9.6px;height:0.7px;background:#c9c9c9"></div>
<svg class="a" style="left:924.6px;top:132px" width="5.4" height="3.4" viewBox="0 0 6 4" ><path d="M0 4 L3 0.4 L6 4Z" fill="#666"/></svg>
<div class="a" style="left:922.4px;top:489.6px;width:9.6px;height:9.4px;background:#fff;box-shadow:0 0 0 0.6px #c8c8c8"></div>
<svg class="a" style="left:924.6px;top:493px" width="5.4" height="3.4" viewBox="0 0 6 4" ><path d="M0 0 L3 3.6 L6 0Z" fill="#666"/></svg>
<div class="a" style="left:162px;top:499px;width:772px;height:20px;background:#e6e6e6"></div>
<div class="a" style="left:162px;top:499px;width:759px;height:1px;background:#cfcfcf"></div>
<svg class="a" style="left:180px;top:506px" width="3.4" height="5.4" viewBox="0 0 4 6" ><path d="M4 0 L0.4 3 L4 6Z" fill="#c2c2c2"/></svg>
<svg class="a" style="left:199.4px;top:506px" width="3.4" height="5.4" viewBox="0 0 4 6" ><path d="M0 0 L3.6 3 L0 6Z" fill="#c2c2c2"/></svg>
<div class="a" style="left:229px;top:499.6px;width:46px;height:16.6px;background:#fff;border-bottom:1.4px solid #3f8a5c;box-sizing:border-box"></div>
<span class="t" style="top:502.09px;font-size:9.4px;line-height:12.22px;color:#1f7246;font-weight:700;left:252px;transform-origin:0 50%;transform-origin:50% 50%;transform:translateX(-50%) scaleX(0.930);-webkit-text-stroke:0.15px #1f7246;">Sheet1</span>
<span class="t" style="top:502.09px;font-size:9.4px;line-height:12.22px;color:#5c5c5c;left:299.2px;transform-origin:0 50%;transform-origin:50% 50%;transform:translateX(-50%) scaleX(0.922);">Sheet16</span>
<div class="a" style="left:324.6px;top:503px;width:1px;height:12px;background:#cfcfcf"></div>
<div class="a" style="left:606.4px;top:505.6px;width:1px;height:1px;background:#a8a8a8;box-shadow:0 3px 0 #a8a8a8,0 6px 0 #a8a8a8"></div>
<div class="a" style="left:617px;top:504.4px;width:303px;height:10.4px;background:#dcdcdc"></div>
<div class="a" style="left:617.4px;top:504.8px;width:9.4px;height:9.6px;background:#fff"></div>
<svg class="a" style="left:620px;top:507px" width="3.4" height="5.4" viewBox="0 0 4 6" ><path d="M4 0 L0.4 3 L4 6Z" fill="#6e6e6e"/></svg>
<div class="a" style="left:627.6px;top:504.8px;width:162.6px;height:9.6px;background:#fff"></div>
<div class="a" style="left:909.6px;top:504.8px;width:9.6px;height:9.6px;background:#fff"></div>
<svg class="a" style="left:913px;top:507px" width="3.4" height="5.4" viewBox="0 0 4 6" ><path d="M0 0 L3.6 3 L0 6Z" fill="#6e6e6e"/></svg>
</div>
<div id="frame"></div>
</body>
</html>
